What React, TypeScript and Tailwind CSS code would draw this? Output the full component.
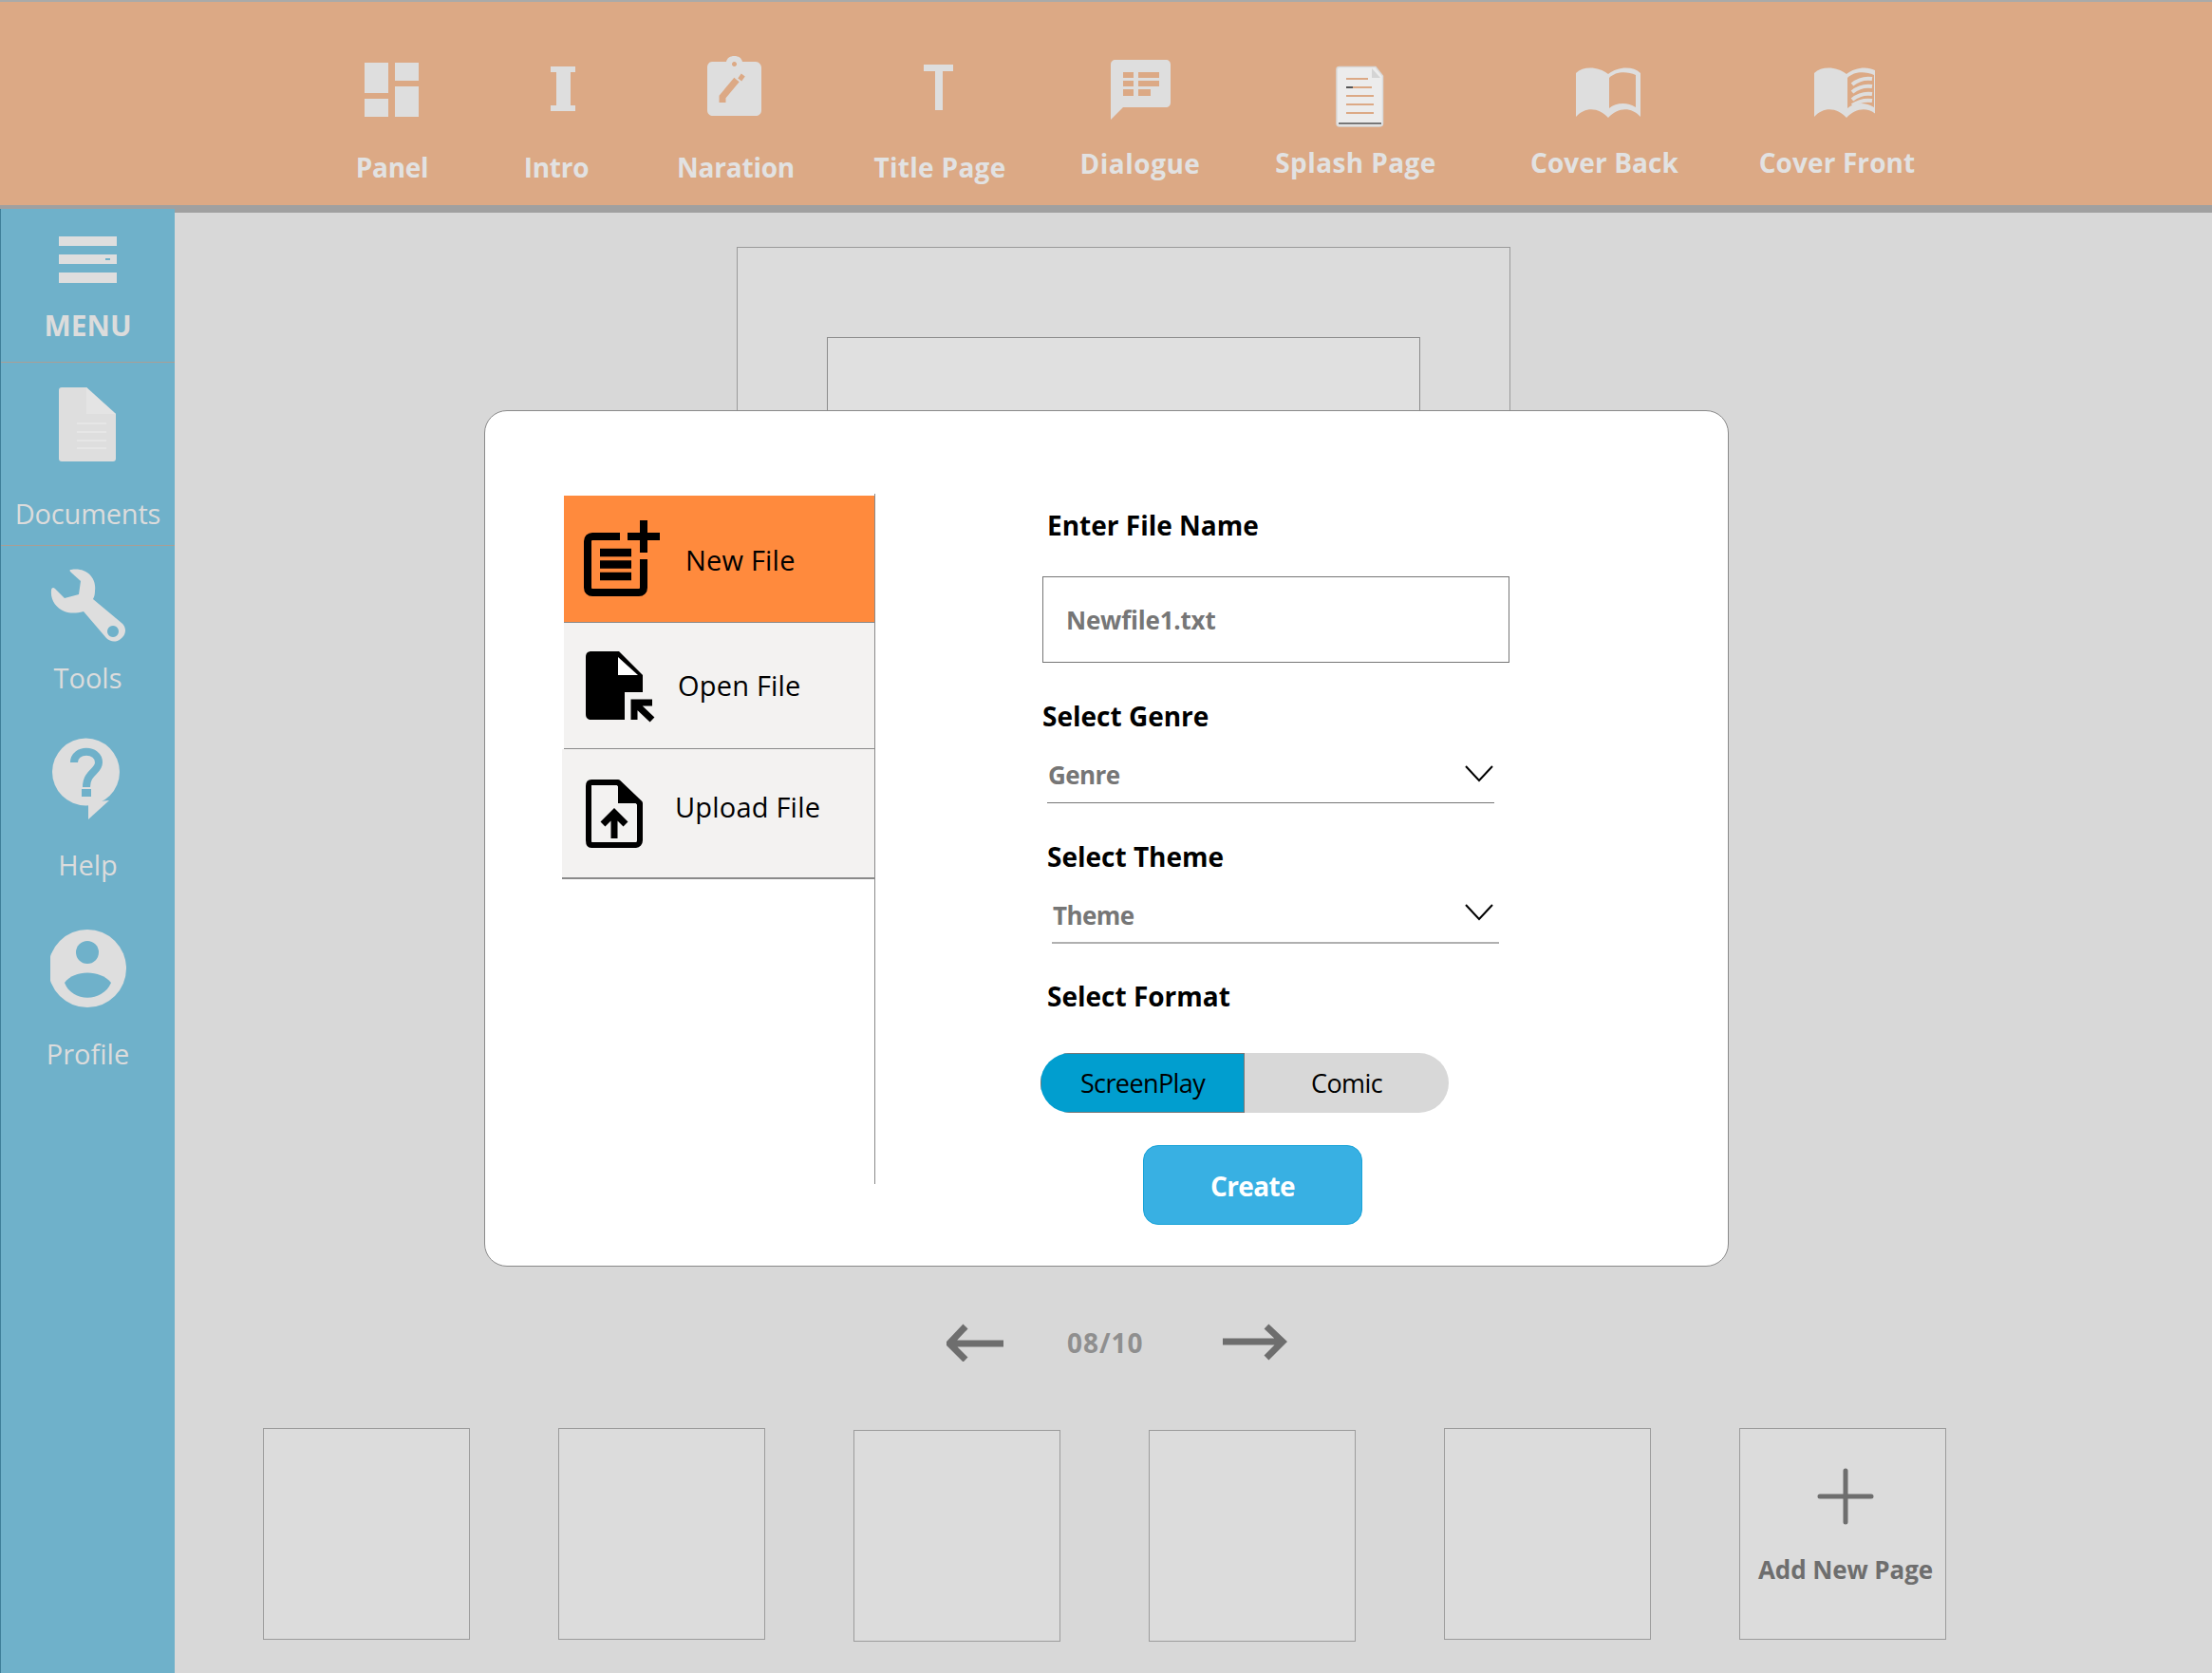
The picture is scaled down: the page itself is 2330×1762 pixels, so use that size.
import type { ReactNode } from "react";

const INK = "#dedede";
const BAR = "#dca985";
const SIDE = "#6fb1ca";

function PanelIcon() {
  return (
    <g fill={INK}>
      <rect x="384" y="66" width="25" height="32" />
      <rect x="384" y="104" width="25" height="19" />
      <rect x="416" y="66" width="25" height="19" />
      <rect x="416" y="91" width="25" height="32" />
    </g>
  );
}

function IntroIcon() {
  return <path fill={INK} d="M580 70H606V76H601V111H606V117H580V111H586V76H580Z" />;
}

function NarationIcon() {
  return (
    <g>
      <path
        fill={INK}
        fillRule="evenodd"
        d="M750 65H765C766 61 769 59 773.5 59C778 59 781 61 782 65H796C799 65 802 68 802 71V116C802 120 799 122 796 122H751C748 122 745 120 745 116V71C745 68 747 65 750 65ZM773.5 65a2.5 2.5 0 1 0 .01 0Z"
      />
      <path stroke={BAR} strokeWidth="7" fill="none" d="M761 108V102L776 84" />
      <path stroke={BAR} strokeWidth="6" fill="none" d="M779 80L783 83" />
    </g>
  );
}

function TitleIcon() {
  return <path fill={INK} d="M973 68H1004V75H993V116H985V75H973Z" />;
}

function DialogueIcon() {
  return (
    <path
      fill={INK}
      fillRule="evenodd"
      d="M1175 63H1228C1231 63 1233 65 1233 68V108C1233 111 1231 113 1228 113H1183L1170 126V68C1170 65 1172 63 1175 63ZM1183 76V82H1194V76ZM1199 76V82H1221V76ZM1183 85V91H1194V85ZM1199 85V91H1221V85ZM1183 94V101H1194V94ZM1199 94V101H1212V94Z"
    />
  );
}

function SplashIcon() {
  return (
    <g>
      <path fill="#ececec" stroke="#d9d9d9" strokeWidth="1.5" d="M1411 70.5H1449L1456.5 80V130C1456.5 132 1455 133 1453 133H1411C1409 133 1408 132 1408 130V73C1408 71 1409 70.5 1411 70.5Z" />
      <path fill="#d4d4d4" d="M1445 72L1454 82H1445Z" />
      <g stroke="#dca985" strokeWidth="2">
        <path d="M1418 83H1441" />
        <path d="M1418 92H1445" />
        <path d="M1418 101H1447" />
        <path d="M1418 110H1447" />
        <path d="M1418 119H1447" />
      </g>
      <path stroke="#555" strokeWidth="2" d="M1418 92H1425" />
      <path stroke="#777" strokeWidth="2" d="M1410 130H1455" />
    </g>
  );
}

function BookIcon({ lines }: { lines?: boolean }) {
  return (
    <g>
      <path
        fill={INK}
        fillRule="evenodd"
        d="M-34 77C-26 69 -10 70 0 78C10 70 26 69 34 77V123C24 112 10 113 0 124C-10 113 -24 112 -34 123ZM1 82V114C8 108 20 107 29 113V79C20 75 8 75 1 82Z"
      />
      {lines && (
        <g stroke={INK} strokeWidth="4" fill="none">
          <path d="M6 89C12 84 20 82 27 83" />
          <path d="M6 97C12 92 20 90 27 91" />
          <path d="M6 105C12 100 20 98 27 99" />
          <path d="M6 111C12 107 20 105 27 106" />
        </g>
      )}
    </g>
  );
}

const topItems: {
  label: string;
  box: string;
  view: string;
  gap: string;
  icon: ReactNode;
}[] = [
  { label: "Panel", box: "w-[160px]", view: "373 56 80 80", gap: "mt-[20px] tracking-[-0.3px]", icon: <PanelIcon /> },
  { label: "Intro", box: "w-[186px]", view: "546 56 80 80", gap: "mt-[20px] tracking-[-0.3px]", icon: <IntroIcon /> },
  { label: "Naration", box: "w-[192px]", view: "735 56 80 80", gap: "mt-[20px] tracking-[-0.2px]", icon: <NarationIcon /> },
  { label: "Title Page", box: "w-[238px]", view: "950 56 80 80", gap: "mt-[20px] tracking-[0.3px]", icon: <TitleIcon /> },
  { label: "Dialogue", box: "w-[184px]", view: "1161 56 80 80", gap: "mt-[16px] tracking-[0.5px]", icon: <DialogueIcon /> },
  { label: "Splash Page", box: "w-[270px]", view: "1388 56 80 80", gap: "mt-[15px] tracking-[0.4px]", icon: <SplashIcon /> },
  { label: "Cover Back", box: "w-[254px]", view: "-44 56 80 80", gap: "mt-[15px] tracking-[0.1px]", icon: <BookIcon /> },
  { label: "Cover Front", box: "w-[236px]", view: "-50 56 80 80", gap: "mt-[15px] tracking-[0.1px]", icon: <BookIcon lines /> },
];

function TopBar() {
  return (
    <div className="flex h-[216px] border-t-2 border-[#a9aaa9] bg-[#dca985] pl-[333px] pt-[54px]">
      {topItems.map((item) => (
        <div key={item.label} className={`flex flex-col items-center ${item.box}`}>
          <svg width="80" height="80" viewBox={item.view}>
            {item.icon}
          </svg>
          <span className={`${item.gap} whitespace-nowrap text-[28px] font-bold leading-[40px] text-[#e2e2e2]`}>
            {item.label}
          </span>
        </div>
      ))}
    </div>
  );
}

function MenuIcon() {
  return (
    <g fill={INK}>
      <rect x="62" y="249" width="61" height="10" />
      <rect x="62" y="268" width="61" height="10" />
      <rect x="62" y="287" width="61" height="11" />
      <rect x="111" y="272" width="5" height="2" fill={SIDE} />
    </g>
  );
}

function DocumentIcon() {
  return (
    <g>
      <path fill={INK} d="M65 408H91L122 436V483C122 485 121 486 119 486H65C63 486 62 485 62 483V411C62 409 63 408 65 408Z" />
      <path fill="#e4e4e4" d="M91 408L122 436H91Z" />
      <g stroke="#e6e6e6" strokeWidth="2">
        <path d="M81 446H112" />
        <path d="M81 455H112" />
        <path d="M81 464H112" />
        <path d="M81 472H112" />
      </g>
    </g>
  );
}

function ToolIcon() {
  return (
    <path
      fill={INK}
      fillRule="evenodd"
      d="M75 600C90 597 102 608 100 622C100 627 99 629 98 631L128 656C134 661 133 669 127 673C122 677 116 676 112 672L88 644C80 646 74 646 68 644C59 640 53 632 54 622C54 619 56 618 58 620L68 630L83 626L85 612L75 603C73 601 73 600 75 600ZM119 659a6 6 0 1 0 .01 0Z"
    />
  );
}

function HelpIcon() {
  return (
    <g>
      <circle cx="90.5" cy="813" r="35.5" fill={INK} />
      <path fill={INK} d="M93 845V863L115 843Z" />
      <path stroke={SIDE} strokeWidth="8" fill="none" d="M78 803C78 788 104 788 104 803C104 813 91 813 91 829" />
      <rect x="86" y="831" width="10" height="8" fill={SIDE} />
    </g>
  );
}

function ProfileIcon() {
  return (
    <g>
      <circle cx="92" cy="1020" r="41" fill={INK} />
      <circle cx="92" cy="1003" r="12" fill={SIDE} />
      <path fill={SIDE} d="M68 1035C78 1021 106 1021 117 1035C108 1056 76 1056 68 1035Z" />
    </g>
  );
}

const sideItems: {
  label: string;
  view: string;
  height: string;
  box: string;
  gap: string;
  text: string;
  icon: ReactNode;
}[] = [
  { label: "MENU", view: "53 240 80 65", height: "h-[65px]", box: "pt-[20px] h-[162px] border-b border-[#a89f96]", gap: "mt-[18px]", text: "font-bold text-[30px]", icon: <MenuIcon /> },
  { label: "Documents", view: "53 400 80 95", height: "h-[95px]", box: "pt-[18px] h-[193px] border-b border-[#a89f96]", gap: "mt-[26px]", text: "font-medium text-[29px] tracking-[-0.2px]", icon: <DocumentIcon /> },
  { label: "Tools", view: "53 595 80 85", height: "h-[85px]", box: "pt-[20px]", gap: "mt-[14px]", text: "font-medium text-[29px]", icon: <ToolIcon /> },
  { label: "Help", view: "53 775 80 93", height: "h-[93px]", box: "pt-[41px]", gap: "mt-[23px]", text: "font-medium text-[29px]", icon: <HelpIcon /> },
  { label: "Profile", view: "53 975 80 90", height: "h-[90px]", box: "pt-[44px]", gap: "mt-[25px]", text: "font-medium text-[29px]", icon: <ProfileIcon /> },
];

function Sidebar() {
  return (
    <aside className="w-[184px] shrink-0 border-t-4 border-[#a0a0a0]">
      <div className="h-full border-l border-[#3f7f99] bg-[#6fb1ca]">
        {sideItems.map((item) => (
          <div key={item.label} className={`flex flex-col items-center ${item.box}`}>
            <svg className={item.height} width="80" viewBox={item.view}>
              {item.icon}
            </svg>
            <span className={`${item.gap} leading-[40px] text-[#dcdcdc] ${item.text}`}>
              {item.label}
            </span>
          </div>
        ))}
      </div>
    </aside>
  );
}

function Thumb({ className, children }: { className?: string; children?: ReactNode }) {
  return (
    <div className={`h-[223px] w-[218px] border border-[#9c9c9c] bg-[#dcdcdc] ${className ?? ""}`}>
      {children}
    </div>
  );
}

function Main() {
  return (
    <main className="flex-1 overflow-hidden border-t-8 border-[#a0a0a0] bg-[#d8d8d8]">
      <div className="ml-[592px] mt-[36px] h-[1040px] w-[815px] border border-[#9a9a9a] bg-[#dcdcdc] pl-[94px] pt-[94px]">
        <div className="h-[600px] w-[625px] border border-[#8c8c8c] bg-[#e0e0e0]" />
      </div>

      <div className="mt-[94px] flex h-[40px] items-center pl-[813px]">
        <svg width="60" height="40" viewBox="997 1394 60 40">
          <path fill="none" stroke="#6e6e6e" strokeWidth="7" d="M1057 1415H1003M1017 1397L1000 1415L1017 1432" />
        </svg>
        <span className="ml-[67px] w-[82px] whitespace-nowrap text-[28px] font-bold leading-[40px] tracking-[1px] text-[#8f8f8f]">08/10</span>
        <svg className="ml-[82px]" width="68" height="40" viewBox="1288 1393 68 40">
          <path fill="none" stroke="#6e6e6e" strokeWidth="7" d="M1288 1412H1350M1334 1396L1351 1412L1334 1429" />
        </svg>
      </div>

      <div className="mt-[70px] flex items-start gap-[93px] pl-[93px]">
        <Thumb />
        <Thumb />
        <Thumb className="mt-[2px]" />
        <Thumb className="mt-[2px]" />
        <Thumb />
        <Thumb className="flex flex-col items-center">
          <svg className="ml-[6px] mt-[41px]" width="60" height="60" viewBox="1914 1546 60 60">
            <path fill="none" stroke="#6e6e6e" strokeWidth="5" strokeLinecap="round" d="M1944 1549V1603M1917 1576H1971" />
          </svg>
          <span className="ml-[6px] mt-[27px] whitespace-nowrap text-[26px] font-bold leading-[40px] tracking-[-0.1px] text-[#6e6e6e]">
            Add New Page
          </span>
        </Thumb>
      </div>
    </main>
  );
}

function NewFileIcon() {
  return (
    <g>
      <path fill="none" stroke="#000" strokeWidth="8" d="M653 564H624C621 564 619 566 619 569V618C619 621 621 623 624 623H673C676 623 678 621 678 618V588" />
      <path fill="none" stroke="#000" strokeWidth="8" d="M678 547V581M661 564H695" />
      <path fill="none" stroke="#000" strokeWidth="8.5" d="M632 581H665M632 593.5H665M632 606H665" />
    </g>
  );
}

function OpenFileIcon() {
  return (
    <g>
      <path d="M623 686H652L677 711V729H658V758H623C619 758 617 756 617 752V692C617 688 619 686 623 686Z" />
      <path fill="#fff" d="M651 692L672 711H651Z" />
      <path fill="none" stroke="#000" strokeWidth="7" d="M668 758V740H687M668 740L687 758" />
    </g>
  );
}

function UploadFileIcon() {
  return (
    <g>
      <path fill="none" stroke="#000" strokeWidth="6" strokeLinejoin="round" d="M623 824H651L674 846V885C674 888 672 890 670 890H623C621 890 620 888 620 885V828C620 825 621 824 623 824Z" />
      <path d="M651 824L674 846H651Z" />
      <path fill="none" stroke="#000" strokeWidth="7" d="M647 883V857M635 868L647 856L659 868" />
    </g>
  );
}

const tabTextClass = "text-[29px] leading-[40px] tracking-[0.2px] text-black";

function Tabs() {
  return (
    <div className="h-[727px] w-[328px] shrink-0 border-r border-[#8a8a8a] pt-[2px]">
      <div className="flex h-[134px] items-center border-b border-[#8a8a8a] bg-[#ff8a3d] pl-[16px]">
        <svg width="90" height="90" viewBox="610 543 90 90">
          <NewFileIcon />
        </svg>
        <span className={`ml-[22px] mt-[2px] ${tabTextClass}`}>New File</span>
      </div>
      <div className="flex h-[133px] items-center border-b border-[#8a8a8a] bg-[#f3f2f1] pl-[16px]">
        <svg width="90" height="90" viewBox="610 677 90 90">
          <OpenFileIcon />
        </svg>
        <span className={`ml-[14px] ${tabTextClass}`}>Open File</span>
      </div>
      <div className="-ml-[2px] flex h-[137px] items-center border-b-2 border-[#8a8a8a] bg-[#f3f2f1] pl-[18px]">
        <svg width="90" height="90" viewBox="610 812 90 90">
          <UploadFileIcon />
        </svg>
        <span className={`mb-[14px] ml-[11px] ${tabTextClass}`}>Upload File</span>
      </div>
    </div>
  );
}

function Chevron() {
  return (
    <svg width="30" height="18" viewBox="0 0 30 18" className="shrink-0">
      <path fill="none" stroke="#000" strokeWidth="2" d="M1 1L15 16L29 1" />
    </svg>
  );
}

const headingClass = "text-[28px] font-bold leading-[40px] text-black";
const valueClass = "text-[26px] font-bold leading-[38px] tracking-[-0.6px] text-[#767676]";

function Form() {
  return (
    <div className="ml-[174px] mt-[13px] w-[500px]">
      <div className={`ml-[7px] ${headingClass}`}>Enter File Name</div>
      <div className="ml-[2px] mt-[34px] flex h-[91px] w-[492px] items-center border border-[#767676] pl-[24px] pt-[2px]">
        <span className="text-[26px] font-bold tracking-[-0.2px] text-[#767676]">Newfile1.txt</span>
      </div>

      <div className={`ml-[2px] mt-[36px] ${headingClass}`}>Select Genre</div>
      <div className="ml-[7px] mt-[23px] flex h-[49px] w-[471px] items-start justify-between border-b border-[#767676] pl-[1px] pr-[1px]">
        <span className={valueClass}>Genre</span>
        <span className="pt-[9px]">
          <Chevron />
        </span>
      </div>

      <div className={`ml-[7px] mt-[36px] ${headingClass}`}>Select Theme</div>
      <div className="ml-[12px] mt-[23px] flex h-[49px] w-[471px] items-start justify-between border-b-2 border-[#b0b0b0] pl-[1px] pr-[6px]">
        <span className={valueClass}>Theme</span>
        <span className="pt-[7px]">
          <Chevron />
        </span>
      </div>

      <div className={`ml-[7px] mt-[35px] ${headingClass}`}>Select Format</div>
      <div className="mt-[40px] flex h-[63px] w-[430px] overflow-hidden rounded-full">
        <div className="flex w-[215px] items-center justify-center border border-[#767676] bg-[#019ecf] pt-[2px] text-[27px] tracking-[-0.6px] text-black">
          ScreenPlay
        </div>
        <div className="flex w-[215px] items-center justify-center bg-[#d8d8d8] pt-[2px] text-[27px] tracking-[-0.6px] text-black">
          Comic
        </div>
      </div>
      <button className="ml-[108px] mt-[34px] flex h-[84px] w-[231px] items-center justify-center rounded-[16px] border border-[#18a3d8] bg-[#38b0e3] pt-[2px] text-[28px] font-bold tracking-[-0.6px] text-white">
        Create
      </button>
    </div>
  );
}

export default function App() {
  return (
    <div className="relative flex h-[1762px] w-[2330px] flex-col overflow-hidden font-['Open_Sans','Noto_Sans',sans-serif]">
      <TopBar />
      <div className="flex flex-1">
        <Sidebar />
        <Main />
      </div>
      <div className="absolute left-[510px] top-[432px] flex h-[902px] w-[1311px] rounded-[24px] border border-[#8a8a8a] bg-white pl-[83px] pt-[87px]">
        <Tabs />
        <Form />
      </div>
    </div>
  );
}
